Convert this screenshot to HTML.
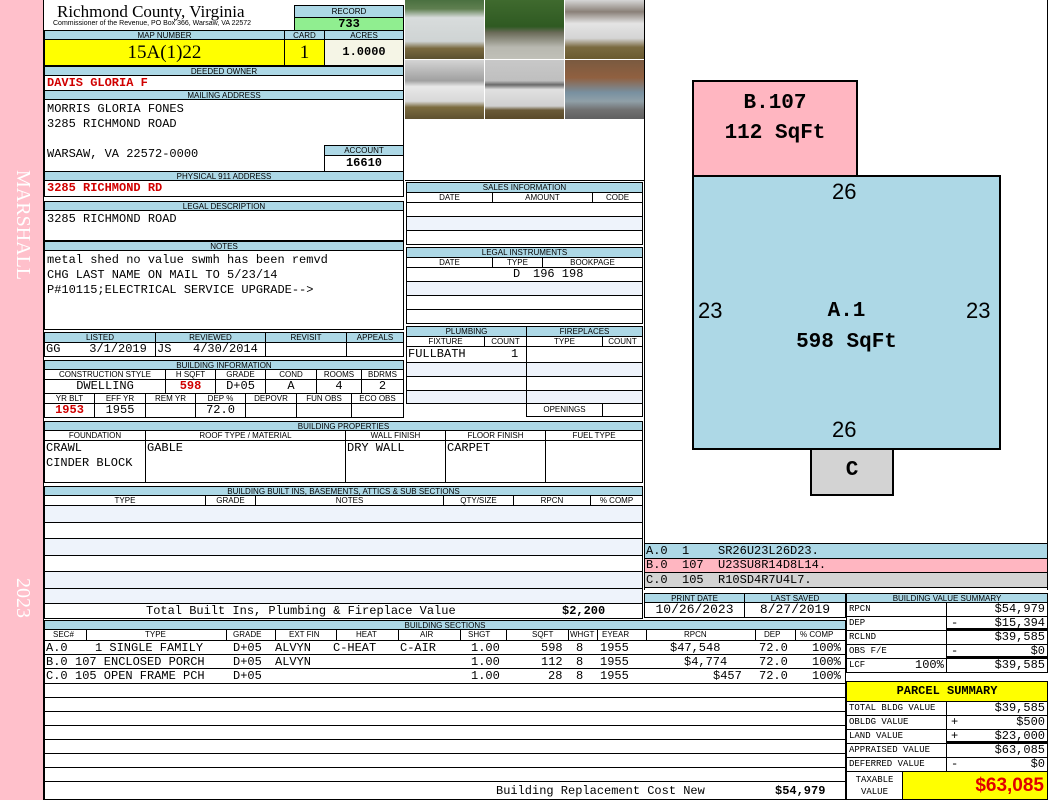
<!DOCTYPE html>
<html><head><meta charset="utf-8"><style>
*{margin:0;padding:0;box-sizing:border-box}
body{width:1050px;height:800px;background:#fff;position:relative;overflow:hidden;font-family:"Liberation Mono",monospace}
.a{position:absolute}
.h{position:absolute;background:#add8e6;border:1px solid #000;font:8px/9px "Liberation Sans",sans-serif;text-align:center;color:#000;white-space:nowrap;overflow:hidden}
.c{position:absolute;border:1px solid #000;background:#fff;font:12px/13px "Liberation Mono",monospace;white-space:nowrap;overflow:hidden}
.alt{background:#eef3fb}
.r{color:#d00000;font-weight:bold}
.ph{position:absolute;width:79px;height:59px;overflow:hidden}
</style></head><body>
<div class="a" style="left:0;top:0;width:43px;height:800px;background:#ffc0cb"></div>
<div class="a" style="left:8px;top:170px;width:30px;height:110px;"><div style="transform:rotate(90deg);transform-origin:0 0;position:absolute;left:26px;top:0;font:20px 'Liberation Serif',serif;color:#fff;white-space:nowrap">MARSHALL</div></div>
<div class="a" style="left:8px;top:578px;width:30px;height:50px;"><div style="transform:rotate(90deg);transform-origin:0 0;position:absolute;left:26px;top:0;font:20px 'Liberation Serif',serif;color:#fff;white-space:nowrap">2023</div></div>
<div class="a" style="left:43px;top:0;width:1px;height:800px;background:#000"></div>

<div class="a" style="left:57px;top:2px;font:17px/20px 'Liberation Serif',serif">Richmond County, Virginia</div>
<div class="a" style="left:53px;top:20px;font:7px/8px 'Liberation Sans',sans-serif">Commissioner of the Revenue, PO Box 366, Warsaw, VA 22572</div>
<div class="h" style="left:294px;top:5px;width:110px;height:13px;line-height:11px">RECORD</div>
<div class="c" style="left:294px;top:17px;width:110px;height:14px;background:#90ee90;text-align:center;font-weight:bold;line-height:12px">733</div>

<div class="h" style="left:44px;top:30px;width:241px;height:10px">MAP NUMBER</div>
<div class="h" style="left:284px;top:30px;width:41px;height:10px">CARD</div>
<div class="h" style="left:324px;top:30px;width:80px;height:10px">ACRES</div>
<div class="c" style="left:44px;top:39px;width:241px;height:27px;background:#ffff00;font:19px/25px 'Liberation Serif',serif;text-align:center">15A(1)22</div>
<div class="c" style="left:284px;top:39px;width:41px;height:27px;background:#ffff00;font:19px/25px 'Liberation Serif',serif;text-align:center">1</div>
<div class="c" style="left:324px;top:39px;width:80px;height:27px;background:#f5f5e6;font-weight:bold;text-align:center;line-height:25px">1.0000</div>

<div class="h" style="left:44px;top:66px;width:360px;height:10px">DEEDED OWNER</div>
<div class="c r" style="left:44px;top:75px;width:360px;height:16px;padding-left:2px;line-height:15px">DAVIS GLORIA F</div>
<div class="h" style="left:44px;top:90px;width:360px;height:10px">MAILING ADDRESS</div>
<div class="c" style="left:44px;top:99px;width:360px;height:73px;padding:2px 0 0 2px;line-height:15px">MORRIS GLORIA FONES<br>3285 RICHMOND ROAD<br><br>WARSAW, VA 22572-0000</div>
<div class="h" style="left:324px;top:145px;width:80px;height:11px">ACCOUNT</div>
<div class="c" style="left:324px;top:155px;width:80px;height:17px;text-align:center;font-weight:bold;line-height:15px">16610</div>
<div class="h" style="left:44px;top:171px;width:360px;height:10px">PHYSICAL 911 ADDRESS</div>
<div class="c r" style="left:44px;top:180px;width:360px;height:17px;padding-left:2px;line-height:15px">3285 RICHMOND RD</div>

<div class="h" style="left:44px;top:201px;width:360px;height:10px">LEGAL DESCRIPTION</div>
<div class="c" style="left:44px;top:210px;width:360px;height:31px;padding:2px 0 0 2px">3285 RICHMOND ROAD</div>
<div class="h" style="left:44px;top:241px;width:360px;height:10px">NOTES</div>
<div class="c" style="left:44px;top:250px;width:360px;height:80px;padding:2px 0 0 2px;line-height:15px">metal shed no value swmh has been remvd<br>CHG LAST NAME ON MAIL TO 5/23/14<br>P#10115;ELECTRICAL SERVICE UPGRADE--&gt;</div>

<div class="h" style="left:44px;top:332px;width:112px;height:11px">LISTED</div>
<div class="h" style="left:155px;top:332px;width:111px;height:11px">REVIEWED</div>
<div class="h" style="left:265px;top:332px;width:82px;height:11px">REVISIT</div>
<div class="h" style="left:346px;top:332px;width:58px;height:11px">APPEALS</div>
<div class="c" style="left:44px;top:342px;width:112px;height:15px;line-height:13px;padding-left:1px">GG&nbsp;&nbsp;&nbsp;&nbsp;3/1/2019</div>
<div class="c" style="left:155px;top:342px;width:111px;height:15px;line-height:13px;padding-left:1px">JS&nbsp;&nbsp;&nbsp;4/30/2014</div>
<div class="c" style="left:265px;top:342px;width:82px;height:15px"></div>
<div class="c" style="left:346px;top:342px;width:58px;height:15px"></div>

<div class="h" style="left:44px;top:360px;width:360px;height:10px">BUILDING INFORMATION</div>
<div class="h" style="left:44px;top:369px;width:122px;height:11px;background:#fff">CONSTRUCTION STYLE</div>
<div class="h" style="left:165px;top:369px;width:51px;height:11px;background:#fff">H SQFT</div>
<div class="h" style="left:215px;top:369px;width:51px;height:11px;background:#fff">GRADE</div>
<div class="h" style="left:265px;top:369px;width:52px;height:11px;background:#fff">COND</div>
<div class="h" style="left:316px;top:369px;width:46px;height:11px;background:#fff">ROOMS</div>
<div class="h" style="left:361px;top:369px;width:43px;height:11px;background:#fff">BDRMS</div>
<div class="c" style="left:44px;top:379px;width:122px;height:15px;text-align:center">DWELLING</div>
<div class="c r" style="left:165px;top:379px;width:51px;height:15px;text-align:center">598</div>
<div class="c" style="left:215px;top:379px;width:51px;height:15px;text-align:center">D+05</div>
<div class="c" style="left:265px;top:379px;width:52px;height:15px;text-align:center">A</div>
<div class="c" style="left:316px;top:379px;width:46px;height:15px;text-align:center">4</div>
<div class="c" style="left:361px;top:379px;width:43px;height:15px;text-align:center">2</div>
<div class="h" style="left:44px;top:393px;width:51px;height:11px;background:#fff">YR BLT</div>
<div class="h" style="left:94px;top:393px;width:52px;height:11px;background:#fff">EFF YR</div>
<div class="h" style="left:145px;top:393px;width:51px;height:11px;background:#fff">REM YR</div>
<div class="h" style="left:195px;top:393px;width:51px;height:11px;background:#fff">DEP %</div>
<div class="h" style="left:245px;top:393px;width:52px;height:11px;background:#fff">DEPOVR</div>
<div class="h" style="left:296px;top:393px;width:56px;height:11px;background:#fff">FUN OBS</div>
<div class="h" style="left:351px;top:393px;width:53px;height:11px;background:#fff">ECO OBS</div>
<div class="c r" style="left:44px;top:403px;width:51px;height:15px;text-align:center">1953</div>
<div class="c" style="left:94px;top:403px;width:52px;height:15px;text-align:center">1955</div>
<div class="c" style="left:145px;top:403px;width:51px;height:15px"></div>
<div class="c" style="left:195px;top:403px;width:51px;height:15px;text-align:center">72.0</div>
<div class="c" style="left:245px;top:403px;width:52px;height:15px"></div>
<div class="c" style="left:296px;top:403px;width:56px;height:15px"></div>
<div class="c" style="left:351px;top:403px;width:53px;height:15px"></div>

<div class="ph" style="left:405px;top:0;background:linear-gradient(#4a7040 0,#5f7f50 15%,#d8dcdc 30%,#cfd4d4 70%,#7a6a40 82%,#5a5030 100%)"></div>
<div class="ph" style="left:485px;top:0;background:linear-gradient(#3f6a2e 0,#2f5a22 45%,#6a6a58 55%,#b8b8b0 80%,#c0c0b8 100%)"></div>
<div class="ph" style="left:565px;top:0;background:linear-gradient(#d6d6d6 0,#8a8078 20%,#e4e4e4 40%,#d4d4d4 65%,#7a6a40 80%,#6a5a30 100%)"></div>
<div class="ph" style="left:405px;top:60px;background:linear-gradient(#d4d4d4 0,#a0a0a0 35%,#e8e8e8 45%,#d8d8d8 70%,#7c6c40 80%,#5e5030 100%)"></div>
<div class="ph" style="left:485px;top:60px;background:linear-gradient(#c8c8c8 0,#bfbfbf 35%,#6a6a6a 42%,#e0e0e0 50%,#d0d0d0 78%,#6a5a38 85%,#5a4a2a 100%)"></div>
<div class="ph" style="left:565px;top:60px;background:linear-gradient(#7a5a40 0,#906040 30%,#7890a0 55%,#90a0a8 70%,#707070 85%,#606060 100%)"></div>
<div class="a" style="left:644px;top:0;width:1px;height:590px;background:#000"></div>
<div class="a" style="left:1047px;top:0;width:1px;height:590px;background:#000"></div>

<div class="a" style="left:405px;top:180px;width:240px;height:1px;background:#000"></div>
<div class="h" style="left:406px;top:182px;width:237px;height:11px">SALES INFORMATION</div>
<div class="h" style="left:406px;top:192px;width:87px;height:11px;background:#fff">DATE</div>
<div class="h" style="left:492px;top:192px;width:101px;height:11px;background:#fff">AMOUNT</div>
<div class="h" style="left:592px;top:192px;width:51px;height:11px;background:#fff">CODE</div>
<div class="c" style="left:406px;top:202px;width:237px;height:15px"></div>
<div class="c alt" style="left:406px;top:216px;width:237px;height:15px"></div>
<div class="c" style="left:406px;top:230px;width:237px;height:15px"></div>

<div class="h" style="left:406px;top:247px;width:237px;height:11px">LEGAL INSTRUMENTS</div>
<div class="h" style="left:406px;top:257px;width:87px;height:11px;background:#fff">DATE</div>
<div class="h" style="left:492px;top:257px;width:51px;height:11px;background:#fff">TYPE</div>
<div class="h" style="left:542px;top:257px;width:101px;height:11px;background:#fff">BOOKPAGE</div>
<div class="c" style="left:406px;top:267px;width:237px;height:15px;line-height:13px"><span class="a" style="left:106px">D</span><span class="a" style="left:126px">196 198</span></div>
<div class="c alt" style="left:406px;top:281px;width:237px;height:15px"></div>
<div class="c" style="left:406px;top:295px;width:237px;height:15px"></div>
<div class="c" style="left:406px;top:309px;width:237px;height:15px"></div>

<div class="h" style="left:406px;top:326px;width:121px;height:11px">PLUMBING</div>
<div class="h" style="left:526px;top:326px;width:117px;height:11px">FIREPLACES</div>
<div class="h" style="left:406px;top:336px;width:79px;height:11px;background:#fff">FIXTURE</div>
<div class="h" style="left:484px;top:336px;width:43px;height:11px;background:#fff">COUNT</div>
<div class="h" style="left:526px;top:336px;width:77px;height:11px;background:#fff">TYPE</div>
<div class="h" style="left:602px;top:336px;width:41px;height:11px;background:#fff">COUNT</div>
<div class="c" style="left:406px;top:346px;width:121px;height:17px;line-height:15px;padding-left:1px">FULLBATH<span class="a" style="left:104px">1</span></div>
<div class="c alt" style="left:406px;top:362px;width:121px;height:15px"></div>
<div class="c" style="left:406px;top:376px;width:121px;height:15px"></div>
<div class="c alt" style="left:406px;top:390px;width:121px;height:14px"></div>
<div class="c" style="left:526px;top:346px;width:117px;height:17px"></div>
<div class="c alt" style="left:526px;top:362px;width:117px;height:15px"></div>
<div class="c" style="left:526px;top:376px;width:117px;height:15px"></div>
<div class="c alt" style="left:526px;top:390px;width:117px;height:14px"></div>
<div class="h" style="left:526px;top:403px;width:77px;height:14px;background:#fff;line-height:12px">OPENINGS</div>
<div class="c" style="left:602px;top:403px;width:41px;height:14px"></div>

<div class="h" style="left:44px;top:421px;width:599px;height:10px">BUILDING PROPERTIES</div>
<div class="h" style="left:44px;top:430px;width:102px;height:11px;background:#fff">FOUNDATION</div>
<div class="h" style="left:145px;top:430px;width:201px;height:11px;background:#fff">ROOF TYPE / MATERIAL</div>
<div class="h" style="left:345px;top:430px;width:101px;height:11px;background:#fff">WALL FINISH</div>
<div class="h" style="left:445px;top:430px;width:101px;height:11px;background:#fff">FLOOR FINISH</div>
<div class="h" style="left:545px;top:430px;width:98px;height:11px;background:#fff">FUEL TYPE</div>
<div class="c" style="left:44px;top:440px;width:102px;height:43px;padding-left:1px;line-height:15px">CRAWL<br>CINDER BLOCK</div>
<div class="c" style="left:145px;top:440px;width:201px;height:43px;padding-left:1px;line-height:15px">GABLE</div>
<div class="c" style="left:345px;top:440px;width:101px;height:43px;padding-left:1px;line-height:15px">DRY WALL</div>
<div class="c" style="left:445px;top:440px;width:101px;height:43px;padding-left:1px;line-height:15px">CARPET</div>
<div class="c" style="left:545px;top:440px;width:98px;height:43px"></div>

<div class="h" style="left:44px;top:486px;width:599px;height:10px">BUILDING BUILT INS, BASEMENTS, ATTICS &amp; SUB SECTIONS</div>
<div class="h" style="left:44px;top:495px;width:162px;height:11px;background:#fff">TYPE</div>
<div class="h" style="left:205px;top:495px;width:51px;height:11px;background:#fff">GRADE</div>
<div class="h" style="left:255px;top:495px;width:189px;height:11px;background:#fff">NOTES</div>
<div class="h" style="left:443px;top:495px;width:71px;height:11px;background:#fff">QTY/SIZE</div>
<div class="h" style="left:513px;top:495px;width:78px;height:11px;background:#fff">RPCN</div>
<div class="h" style="left:590px;top:495px;width:53px;height:11px;background:#fff">% COMP</div>
<div class="c alt" style="left:44px;top:505px;width:599px;height:18px"></div>
<div class="c" style="left:44px;top:522px;width:599px;height:17px"></div>
<div class="c alt" style="left:44px;top:538px;width:599px;height:18px"></div>
<div class="c" style="left:44px;top:555px;width:599px;height:17px"></div>
<div class="c alt" style="left:44px;top:571px;width:599px;height:18px"></div>
<div class="c alt" style="left:44px;top:588px;width:599px;height:16px"></div>
<div class="c" style="left:44px;top:603px;width:599px;height:16px;line-height:14px"><span class="a" style="left:101px">Total Built Ins, Plumbing &amp; Fireplace Value</span><span class="a" style="left:517px;font-weight:bold">$2,200</span></div>

<div class="c" style="left:644px;top:543px;width:404px;height:16px;background:#add8e6;line-height:14px;padding-left:1px">A.0&nbsp;&nbsp;1&nbsp;&nbsp;&nbsp;&nbsp;SR26U23L26D23.</div>
<div class="c" style="left:644px;top:558px;width:404px;height:15px;background:#ffb6c1;line-height:13px;padding-left:1px">B.0&nbsp;&nbsp;107&nbsp;&nbsp;U23SU8R14D8L14.</div>
<div class="c" style="left:644px;top:572px;width:404px;height:16px;background:#d3d3d3;line-height:14px;padding-left:1px">C.0&nbsp;&nbsp;105&nbsp;&nbsp;R10SD4R7U4L7.</div>

<div class="a" style="left:692px;top:80px;width:166px;height:97px;background:#ffb6c1;border:2px solid #000;border-bottom:none"></div>
<div class="a" style="left:692px;top:89px;width:166px;text-align:center;font:bold 21px/30px 'Liberation Mono',monospace">B.107<br>112 SqFt</div>
<div class="a" style="left:692px;top:175px;width:309px;height:275px;background:#add8e6;border:2px solid #000"></div>
<div class="a" style="left:810px;top:448px;width:84px;height:48px;background:#d3d3d3;border:2px solid #000"></div>
<div class="a" style="left:810px;top:458px;width:84px;text-align:center;font:bold 21px/26px 'Liberation Mono',monospace">C</div>
<div class="a" style="left:692px;top:296px;width:309px;text-align:center;font:bold 21px/31px 'Liberation Mono',monospace">A.1<br>598 SqFt</div>
<div class="a" style="left:832px;top:180px;font:22px/24px 'Liberation Sans',sans-serif">26</div>
<div class="a" style="left:832px;top:418px;font:22px/24px 'Liberation Sans',sans-serif">26</div>
<div class="a" style="left:698px;top:299px;font:22px/24px 'Liberation Sans',sans-serif">23</div>
<div class="a" style="left:966px;top:299px;font:22px/24px 'Liberation Sans',sans-serif">23</div>

<div class="h" style="left:644px;top:593px;width:101px;height:10px">PRINT DATE</div>
<div class="h" style="left:744px;top:593px;width:102px;height:10px">LAST SAVED</div>
<div class="c" style="left:644px;top:602px;width:101px;height:16px;text-align:center;font-size:13px;line-height:14px">10/26/2023</div>
<div class="c" style="left:744px;top:602px;width:102px;height:16px;text-align:center;font-size:13px;line-height:14px">8/27/2019</div>

<div class="h" style="left:44px;top:620px;width:802px;height:10px">BUILDING SECTIONS</div>
<div class="c" style="left:44px;top:629px;width:802px;height:12px"></div>
<div class="a" style="left:44px;top:630px;width:802px;height:10px;font:8px/10px 'Liberation Sans',sans-serif">
<span class="a" style="left:9px">SEC#</span><span class="a" style="left:101px">TYPE</span><span class="a" style="left:189px">GRADE</span><span class="a" style="left:245px">EXT FIN</span><span class="a" style="left:312px">HEAT</span><span class="a" style="left:376px">AIR</span><span class="a" style="left:424px">SHGT</span><span class="a" style="left:488px">SQFT</span><span class="a" style="left:526px">WHGT</span><span class="a" style="left:558px">EYEAR</span><span class="a" style="left:640px">RPCN</span><span class="a" style="left:720px">DEP</span><span class="a" style="left:756px">% COMP</span></div>
<div class="c" style="left:44px;top:640px;width:802px;height:15px"></div>
<div class="c" style="left:44px;top:654px;width:802px;height:15px"></div>
<div class="c" style="left:44px;top:668px;width:802px;height:16px"></div>
<div class="a" style="left:44px;top:629px;width:802px;height:12px">
<div class="a" style="left:42px;top:0;width:1px;height:12px;background:#000"></div><div class="a" style="left:182px;top:0;width:1px;height:12px;background:#000"></div><div class="a" style="left:231px;top:0;width:1px;height:12px;background:#000"></div><div class="a" style="left:292px;top:0;width:1px;height:12px;background:#000"></div><div class="a" style="left:354px;top:0;width:1px;height:12px;background:#000"></div><div class="a" style="left:416px;top:0;width:1px;height:12px;background:#000"></div><div class="a" style="left:462px;top:0;width:1px;height:12px;background:#000"></div><div class="a" style="left:524px;top:0;width:1px;height:12px;background:#000"></div><div class="a" style="left:553px;top:0;width:1px;height:12px;background:#000"></div><div class="a" style="left:602px;top:0;width:1px;height:12px;background:#000"></div><div class="a" style="left:711px;top:0;width:1px;height:12px;background:#000"></div><div class="a" style="left:751px;top:0;width:1px;height:12px;background:#000"></div>
</div>
<div class="a" style="left:44px;top:641px;width:802px;height:42px;font:12px/14px 'Liberation Mono',monospace;white-space:nowrap"><div style="position:relative;height:14px"><span class="a" style="left:2px">A.0</span><span class="a" style="left:51px">1 SINGLE FAMILY</span><span class="a" style="left:189px">D+05</span><span class="a" style="left:231px">ALVYN</span><span class="a" style="left:289px">C-HEAT</span><span class="a" style="left:356px">C-AIR</span><span class="a" style="left:427px">1.00</span><span class="a" style="left:497px">598</span><span class="a" style="left:532px">8</span><span class="a" style="left:556px">1955</span><span class="a" style="left:626px">$47,548</span><span class="a" style="left:715px">72.0</span><span class="a" style="left:768px">100%</span></div><div style="position:relative;height:14px"><span class="a" style="left:2px">B.0</span><span class="a" style="left:31px">107 ENCLOSED PORCH</span><span class="a" style="left:189px">D+05</span><span class="a" style="left:231px">ALVYN</span><span class="a" style="left:427px">1.00</span><span class="a" style="left:497px">112</span><span class="a" style="left:532px">8</span><span class="a" style="left:556px">1955</span><span class="a" style="left:640px">$4,774</span><span class="a" style="left:715px">72.0</span><span class="a" style="left:768px">100%</span></div><div style="position:relative;height:14px"><span class="a" style="left:2px">C.0</span><span class="a" style="left:31px">105 OPEN FRAME PCH</span><span class="a" style="left:189px">D+05</span><span class="a" style="left:427px">1.00</span><span class="a" style="left:504px">28</span><span class="a" style="left:532px">8</span><span class="a" style="left:556px">1955</span><span class="a" style="left:669px">$457</span><span class="a" style="left:715px">72.0</span><span class="a" style="left:768px">100%</span></div></div>
<div class="c" style="left:44px;top:683px;width:802px;height:15px"></div>
<div class="c" style="left:44px;top:697px;width:802px;height:15px"></div>
<div class="c" style="left:44px;top:711px;width:802px;height:15px"></div>
<div class="c" style="left:44px;top:725px;width:802px;height:15px"></div>
<div class="c" style="left:44px;top:739px;width:802px;height:15px"></div>
<div class="c" style="left:44px;top:753px;width:802px;height:15px"></div>
<div class="c" style="left:44px;top:767px;width:802px;height:15px"></div>
<div class="c" style="left:44px;top:781px;width:802px;height:19px;line-height:18px"><span class="a" style="left:451px">Building Replacement Cost New</span><span class="a" style="left:730px;font-weight:bold">$54,979</span></div>

<div class="h" style="left:846px;top:593px;width:202px;height:10px">BUILDING VALUE SUMMARY</div>
<div class="a" style="left:846px;top:602px;width:202px;font:12px/13px 'Liberation Mono',monospace">
<div class="c" style="left:0;top:0;width:101px;height:15px;font-size:9px;padding-left:2px">RPCN</div><div class="c" style="left:100px;top:0;width:102px;height:15px;text-align:right;padding-right:2px">$54,979</div>
<div class="c" style="left:0;top:14px;width:101px;height:15px;font-size:9px;padding-left:2px">DEP</div><div class="c" style="left:100px;top:14px;width:102px;height:15px;text-align:right;padding-right:2px;border-bottom:3px solid #000"><span class="a" style="left:4px">-</span>$15,394</div>
<div class="c" style="left:0;top:28px;width:101px;height:15px;font-size:9px;padding-left:2px">RCLND</div><div class="c" style="left:100px;top:28px;width:102px;height:15px;text-align:right;padding-right:2px">$39,585</div>
<div class="c" style="left:0;top:42px;width:101px;height:15px;font-size:9px;padding-left:2px">OBS F/E</div><div class="c" style="left:100px;top:42px;width:102px;height:15px;text-align:right;padding-right:2px;border-bottom:3px solid #000"><span class="a" style="left:4px">-</span>$0</div>
<div class="c" style="left:0;top:56px;width:101px;height:15px;font-size:9px;padding-left:2px">LCF<span class="a" style="left:68px;font-size:12px">100%</span></div><div class="c" style="left:100px;top:56px;width:102px;height:15px;text-align:right;padding-right:2px">$39,585</div>
</div>

<div class="c" style="left:846px;top:681px;width:202px;height:21px;background:#ffff00;text-align:center;font:bold 12px/19px 'Liberation Mono',monospace">PARCEL SUMMARY</div>
<div class="a" style="left:846px;top:701px;width:202px;font:12px/13px 'Liberation Mono',monospace">
<div class="c" style="left:0;top:0;width:101px;height:15px;font-size:9px;padding-left:2px">TOTAL BLDG VALUE</div><div class="c" style="left:100px;top:0;width:102px;height:15px;text-align:right;padding-right:2px">$39,585</div>
<div class="c" style="left:0;top:14px;width:101px;height:15px;font-size:9px;padding-left:2px">OBLDG VALUE</div><div class="c" style="left:100px;top:14px;width:102px;height:15px;text-align:right;padding-right:2px"><span class="a" style="left:4px">+</span>$500</div>
<div class="c" style="left:0;top:28px;width:101px;height:15px;font-size:9px;padding-left:2px">LAND VALUE</div><div class="c" style="left:100px;top:28px;width:102px;height:15px;text-align:right;padding-right:2px;border-bottom:3px solid #000"><span class="a" style="left:4px">+</span>$23,000</div>
<div class="c" style="left:0;top:42px;width:101px;height:15px;font-size:9px;padding-left:2px">APPRAISED VALUE</div><div class="c" style="left:100px;top:42px;width:102px;height:15px;text-align:right;padding-right:2px">$63,085</div>
<div class="c" style="left:0;top:56px;width:101px;height:15px;font-size:9px;padding-left:2px">DEFERRED VALUE</div><div class="c" style="left:100px;top:56px;width:102px;height:15px;text-align:right;padding-right:2px"><span class="a" style="left:4px">-</span>$0</div>
<div class="c" style="left:0;top:70px;width:57px;height:29px;font-size:9px;line-height:12px;text-align:center;padding-top:2px">TAXABLE<br>VALUE</div>
<div class="c" style="left:56px;top:70px;width:146px;height:29px;background:#ffff00;color:#e00000;text-align:right;padding-right:3px;font:bold 19px/27px 'Liberation Sans',sans-serif">$63,085</div>
</div>
</body></html>
